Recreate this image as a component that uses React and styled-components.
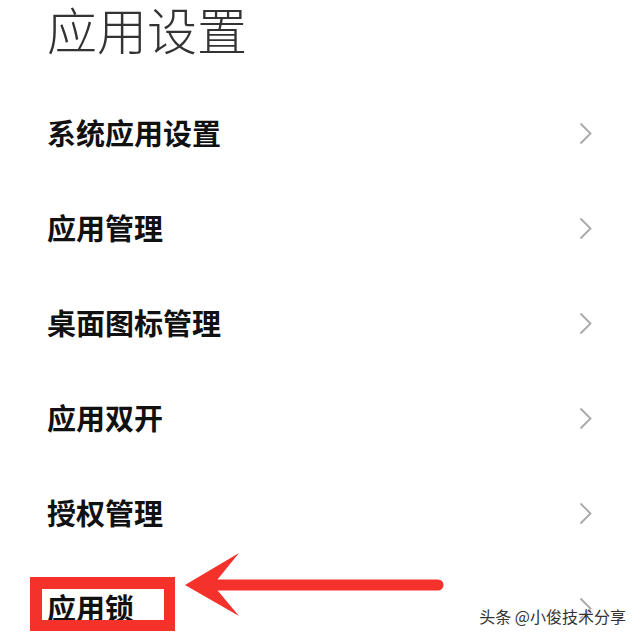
import React from "react"
import styled, { createGlobalStyle } from "styled-components"

const GlobalStyle = createGlobalStyle`
    html, body {
        margin: 0;
        padding: 0;
        background: #ffffff;
        overflow: hidden;
    }
    body {
        font-family: "Noto Sans CJK SC", "Noto Sans", sans-serif;
    }
`

// 页面
const Page = styled.div`
    position: relative;
    width: 640px;
    height: 640px;
    overflow: hidden;
    background: #ffffff;
`

const Header = styled.div`
    height: 86px;
    display: flex;
    align-items: flex-start;
    padding: 1px 47px 0;
    box-sizing: border-box;
`

const Title = styled.h1`
    margin: 0;
    font-size: 50px;
    font-weight: 300;
    color: #333333;
    line-height: 55px;
`

const List = styled.ul`
    list-style: none;
    margin: 0;
    padding: 0;
`

const Row = styled.li`
    height: 95px;
    display: flex;
    align-items: center;
    justify-content: space-between;
    padding: 0 48px 0 47px;
    box-sizing: border-box;
`

const Label = styled.span`
    font-size: 29px;
    font-weight: 700;
    color: #111111;
    margin-top: -3px;
`

const Chevron = styled.svg`
    width: 13px;
    height: 23px;
    flex-shrink: 0;
`

// 红框 + 箭头 标注
const Highlight = styled.div`
    position: absolute;
    left: 30px;
    top: 577px;
    width: 145px;
    height: 54px;
    border: 12px solid #f5312c;
    border-right-width: 11px;
    border-bottom-width: 11px;
    box-sizing: border-box;
`

const Arrow = styled.svg`
    position: absolute;
    left: 180px;
    top: 548px;
    width: 270px;
    height: 75px;
`

const Watermark = styled.div`
    position: absolute;
    right: 14px;
    bottom: 16px;
    font-size: 16px;
    color: #333333;
    line-height: 1;
    text-shadow: 0 0 2px #ffffff, 0 0 2px #ffffff;
    white-space: nowrap;
`

const items = ["系统应用设置", "应用管理", "桌面图标管理", "应用双开", "授权管理", "应用锁"]

function ChevronIcon() {
    return (
        <Chevron viewBox="0 0 13 23">
            <path d="M1.5 1.5 L11.5 11.5 L1.5 21.5" fill="none" stroke="#a8a8a8" strokeWidth="1.8" />
        </Chevron>
    )
}

export default function App() {
    return (
        <Page>
            <GlobalStyle />
            <Header>
                <Title>应用设置</Title>
            </Header>

            <List>
                {items.map((item) => (
                    <Row key={item}>
                        <Label>{item}</Label>
                        <ChevronIcon />
                    </Row>
                ))}
            </List>

            <Highlight />
            <Arrow viewBox="0 0 270 75">
                <path d="M5 37 L59 5 L33 37 L59 68 Z" fill="#f5312c" />
                <line x1="30" y1="37" x2="258" y2="37" stroke="#f5312c" strokeWidth="11" strokeLinecap="round" />
            </Arrow>

            <Watermark>头条 @小俊技术分享</Watermark>
        </Page>
    )
}
